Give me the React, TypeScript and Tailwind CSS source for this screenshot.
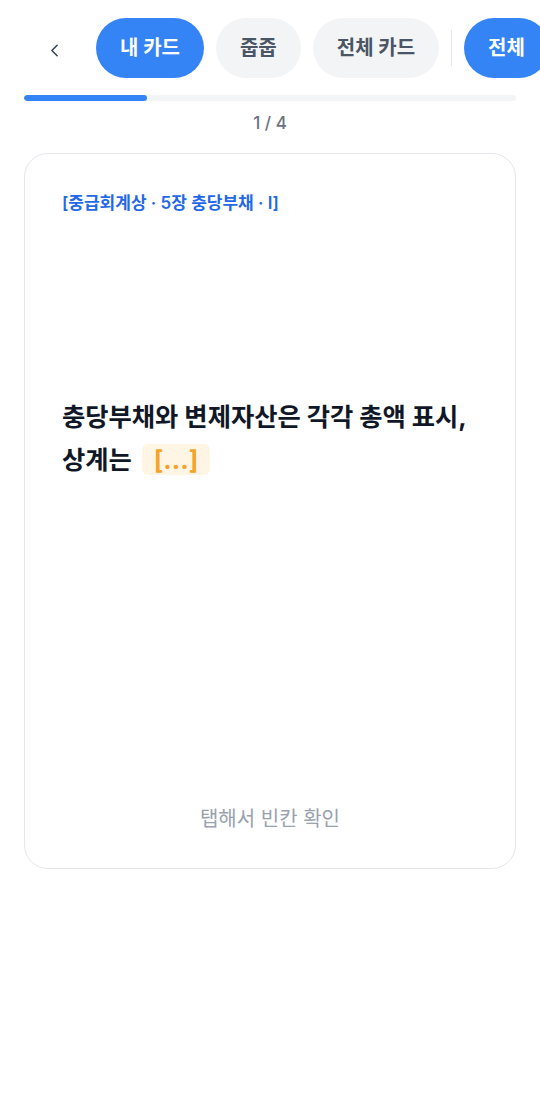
import React, { useState } from 'react';
import { ChevronLeft } from 'lucide-react';

const tabs = [
  { id: 'mine', label: '내 카드' },
  { id: 'pick', label: '줍줍' },
  { id: 'all', label: '전체 카드' },
];

export default function App() {
  const [tab, setTab] = useState('mine');
  const [revealed, setRevealed] = useState(false);
  const index = 1;
  const total = 4;

  return (
    <div
      className="min-h-[1110px] w-full bg-white text-gray-900"
      style={{ fontFamily: 'Inter, "Noto Sans CJK KR", sans-serif' }}
    >
      {/* Top tabs */}
      <div className="flex items-center overflow-hidden whitespace-nowrap pl-6 pt-[18px]">
        <button className="grid h-[60px] w-[60px] shrink-0 place-items-center pt-1 text-gray-700">
          <ChevronLeft size={21} strokeWidth={1.75} />
        </button>
        <div className="ml-3 flex shrink-0 items-center gap-3">
          {tabs.map((t) => (
            <button
              key={t.id}
              onClick={() => setTab(t.id)}
              className={`h-[60px] shrink-0 rounded-full px-6 text-xl font-bold ${
                tab === t.id ? 'bg-[#3584f6] text-white' : 'bg-gray-100 text-gray-600'
              }`}
            >
              {t.label}
            </button>
          ))}
          <div className="h-9 w-px shrink-0 bg-gray-200" />
          <button className="h-[60px] shrink-0 rounded-full bg-[#3584f6] px-6 text-xl font-bold text-white">
            전체
          </button>
        </div>
      </div>

      {/* Progress */}
      <div className="px-6 pt-[17px]">
        <div className="h-1.5 w-full overflow-hidden rounded-full bg-gray-100">
          <div className="h-full rounded-full bg-[#3584f6]" style={{ width: `${(index / total) * 100}%` }} />
        </div>
        <p className="mt-[10px] text-center text-[17px] font-medium text-gray-500">
          {index} / {total}
        </p>
      </div>

      {/* Card */}
      <div className="px-6 pt-[16px]">
        <button
          onClick={() => setRevealed(!revealed)}
          className="flex h-[716px] w-full flex-col rounded-3xl border border-gray-200 bg-white px-[37px] pb-[34px] pt-[37px] text-left"
        >
          <p className="text-[17px] font-semibold text-[#2468e8]">[중급회계상 · 5장 충당부채 · I]</p>

          <p className="mt-[179px] text-[25.3px] font-bold leading-[43px] text-gray-900">
            충당부채와 변제자산은 각각 총액 표시,
            <br />
            상계는{' '}
            <span className="ml-1 inline-block rounded-md bg-[#fff5e5] px-3 leading-[31px] text-[#f5a42a]">
              {revealed ? '불가' : '[...]'}
            </span>
          </p>

          <p className="mt-auto w-full text-center text-[20px] text-gray-400">탭해서 빈칸 확인</p>
        </button>
      </div>
    </div>
  );
}
